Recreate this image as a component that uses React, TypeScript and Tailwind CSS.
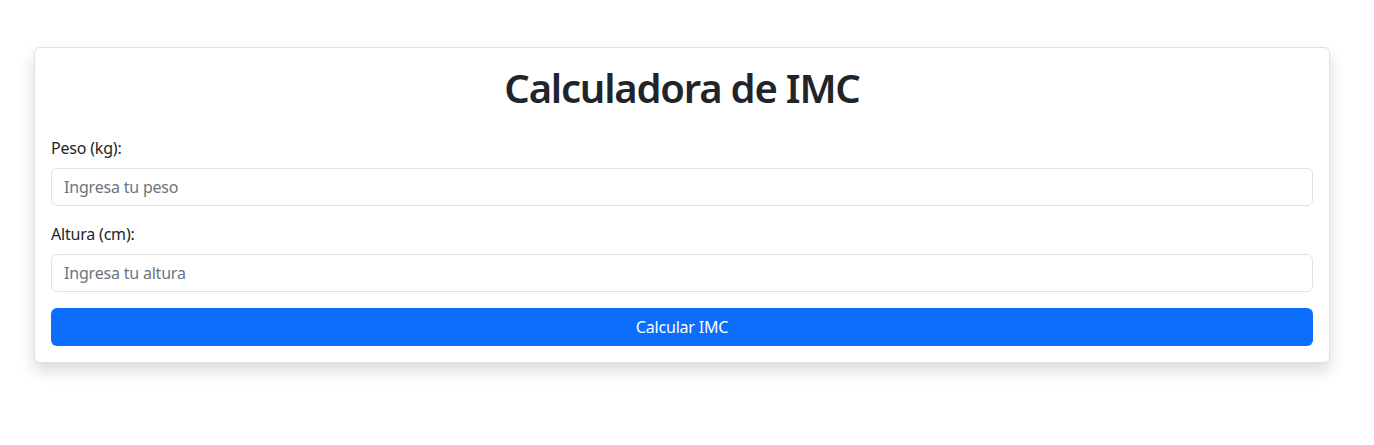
import React, { useState } from 'react'

export default function App(): JSX.Element {
  const [peso, setPeso] = useState('')
  const [altura, setAltura] = useState('')

  return (
    <div
      className="min-h-[445px] bg-white pt-[47px] text-[#212529]"
      style={{ fontFamily: '"Noto Sans", "Open Sans", Arial, sans-serif' }}
    >
      <div className="ml-[34px] w-[1296px] rounded-[6px] border border-[#dee2e6] bg-white p-4 shadow-[0_8px_16px_rgba(0,0,0,0.15)]">
        <h1 className="mb-6 text-center text-[40px] leading-[48px] font-semibold tracking-[-1.2px]">
          Calculadora de IMC
        </h1>
        <div className="mb-4">
          <label className="mb-2 block text-base leading-6 tracking-[-0.2px]">Peso (kg):</label>
          <input
            value={peso}
            onChange={(e) => setPeso(e.target.value)}
            placeholder="Ingresa tu peso"
            className="block h-[38px] w-full rounded-[6px] border border-[#dee2e6] px-3 text-base tracking-[-0.2px] outline-none placeholder:text-[#6c757d]"
          />
        </div>
        <div className="mb-4">
          <label className="mb-2 block text-base leading-6 tracking-[-0.2px]">Altura (cm):</label>
          <input
            value={altura}
            onChange={(e) => setAltura(e.target.value)}
            placeholder="Ingresa tu altura"
            className="block h-[38px] w-full rounded-[6px] border border-[#dee2e6] px-3 text-base tracking-[-0.2px] outline-none placeholder:text-[#6c757d]"
          />
        </div>
        <button className="block h-[38px] w-full rounded-[6px] bg-[#0d6efd] text-base tracking-[-0.2px] text-white">
          Calcular IMC
        </button>
      </div>
    </div>
  )
}
